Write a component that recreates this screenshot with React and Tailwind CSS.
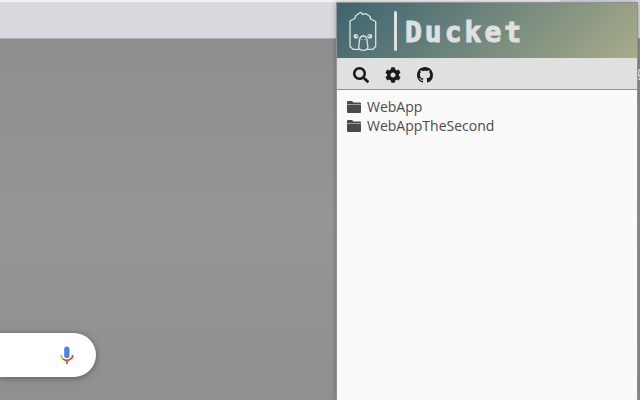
import React from "react";
import { FaSearch, FaCog } from "react-icons/fa";

const folders = ["WebApp", "WebAppTheSecond"];

function DuckLogo() {
  return (
    <svg className="h-10 w-7 shrink-0" viewBox="0 0 28 40" fill="none" stroke="#e0e0e0" strokeWidth="1.3" strokeLinejoin="round" strokeLinecap="round" role="img" aria-label="Duck">
      <path d="M10 38.300H4L1 35.500V10L5.800 7.500L6.700 4.700L11.700 1.300L13.500 3.300L17 2.700L21 5.500L21.700 8L26.700 10.500V35.500L24 38.300H18.500" />
      <path d="M9.700 36L10.500 29Q11 25 14.300 25T18 29L18.900 36Q18.500 39.300 14.300 39.300T9.700 36Z" />
      <path d="M12.800 28.500V28.600M15.800 28.500V28.600" strokeWidth="0.900" />
      <circle cx="7" cy="25.300" r="2.400" fill="#e0e0e0" stroke="none" />
      <circle cx="20.800" cy="25.300" r="2.400" fill="#e0e0e0" stroke="none" />
      <circle cx="7.800" cy="25" r="0.800" fill="#3c6770" stroke="none" />
      <circle cx="20" cy="25" r="0.800" fill="#3c6770" stroke="none" />
    </svg>
  );
}

function GithubIcon() {
  return (
    <svg className="size-4" viewBox="0 0 16 16" fill="currentColor" aria-hidden="true">
      <path fillRule="evenodd" d="M8 0C3.580 0 0 3.580 0 8c0 3.540 2.290 6.530 5.470 7.590.4.070.55-.17.55-.38 0-.19-.01-.82-.01-1.490-2.010.37-2.530-.49-2.690-.94-.09-.23-.48-.94-.82-1.130-.28-.15-.68-.52-.01-.53.63-.01 1.080.58 1.230.82.72 1.210 1.870.87 2.330.66.070-.52.28-.87.51-1.070-1.780-.2-3.640-.89-3.640-3.950 0-.87.31-1.590.82-2.150-.08-.2-.36-1.020.08-2.120 0 0 .67-.21 2.200.82.64-.18 1.320-.27 2-.27s1.360.09 2 .27c1.530-1.040 2.200-.82 2.200-.82.44 1.100.16 1.920.08 2.120.51.56.82 1.270.82 2.150 0 3.070-1.870 3.750-3.650 3.950.29.25.54.73.54 1.480 0 1.070-.01 1.930-.01 2.200 0 .21.15.46.55.38A8.010 8.010 0 0 0 16 8c0-4.420-3.580-8-8-8Z" />
    </svg>
  );
}

function FolderIcon() {
  return (
    <svg className="h-3 w-3.5 shrink-0" viewBox="0 0 14 12" fill="#4a4a4a" aria-hidden="true">
      <path d="M0 3V1Q0 0 1 0H5L6.500 1.500H13Q14 1.500 14 2.500V3Z" />
      <path d="M0 4H14V11Q14 12 13 12H1Q0 12 0 11Z" />
      <path d="M0 3H14V4H0Z" fill="#a0a0a0" />
    </svg>
  );
}

function Microphone() {
  return (
    <svg className="h-5 w-3.5" viewBox="0 0 14 20" fill="none" aria-hidden="true">
      <rect x="4.200" y="1.500" width="5.200" height="11.500" rx="2.600" fill="#4285f4" />
      <path d="M1 10Q1 12.300 3 14" stroke="#fbbc04" strokeWidth="1.800" />
      <path d="M2.800 13.900Q7 17 10.800 13.900Q12.700 12.500 12.700 10" stroke="#ea4335" strokeWidth="1.800" />
      <path d="M6.900 16V19" stroke="#34a853" strokeWidth="2" />
    </svg>
  );
}

function Popup() {
  return (
    <section className="absolute top-[3px] right-[3px] bottom-0 flex w-[300px] flex-col bg-[#fafafa] shadow-[0_0_0_1px_#929295,0_0_6px_rgba(0,0,0,0.4)]">
      <header className="flex h-[55px] items-center bg-linear-135 from-[#3b646f] to-[#a9ac88] pl-3 text-[#e0e0e0]">
        <DuckLogo />
        <span className="ml-[17px] h-10 w-[3px] rounded-full bg-[#e0e0e0]" />
        <h1 className="ml-2 pt-1 font-['DejaVu_Sans_Mono',monospace] text-[28px] leading-9 font-bold tracking-[3px] [-webkit-text-stroke:1px_#e0e0e0]">Ducket</h1>
      </header>
      <nav className="flex h-8 items-center gap-4 border-b border-[#929292] bg-[#e0e0e0] px-4 pt-0.5 text-base text-[#1b1b1b]">
        <button type="button" aria-label="Search"><FaSearch /></button>
        <button type="button" aria-label="Settings"><FaCog /></button>
        <a href="#github" aria-label="GitHub"><GithubIcon /></a>
      </nav>
      <ul className="px-2.5 py-[7px] font-['Open_Sans',sans-serif] text-sm leading-[19px] text-[#4a4a4a]">
        {folders.map((name) => (
          <li key={name}>
            <button type="button" className="flex items-center gap-1.5"><FolderIcon />{name}</button>
          </li>
        ))}
      </ul>
    </section>
  );
}

export default function App() {
  return (
    <main className="relative flex min-h-screen flex-col overflow-hidden font-['Roboto',sans-serif]">
      <div className="flex h-0.5 justify-end bg-[#f1f2f4]">
        <div className="w-20 rounded-tl-full bg-[#d9dadf]" />
      </div>
      <div className="h-[37px] border-b border-[#aaabaf] bg-[#d9dadf]" />
      <div className="flex grow flex-col bg-linear-to-b from-[#8e8e8e] via-[#969696] to-[#909090]">
        <p className="mt-[23px] w-[3px] self-end text-sm leading-5 text-white">g</p>
        <div className="mt-auto mb-[23px] flex h-11 w-24 items-center justify-end rounded-r-full bg-white pr-[22px] shadow-[0_1px_6px_rgba(32,33,36,0.5)]">
          <button type="button" aria-label="Search by voice"><Microphone /></button>
        </div>
      </div>
      <Popup />
    </main>
  );
}
